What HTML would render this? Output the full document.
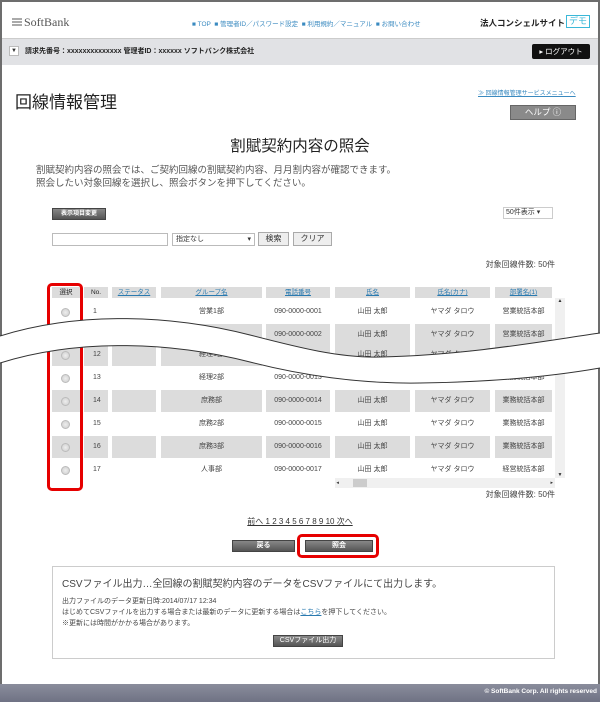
<!DOCTYPE html>
<html><head><meta charset="utf-8"><style>
*{margin:0;padding:0;box-sizing:border-box}
body{width:600px;height:702px;position:relative;background:#fff;font-family:"Liberation Sans","Noto Sans CJK JP",sans-serif;color:#333;overflow:hidden}
.a{position:absolute;white-space:nowrap}
.btn{position:absolute;background:linear-gradient(#888,#555);color:#fff;font-size:7px;text-align:center;font-weight:bold;border:1px solid #444}
.cell{position:absolute;height:20px;font-size:7px;line-height:20px;text-align:center;color:#444}
.sh{background:#dcdcdc}
.hd{position:absolute;top:287px;height:11px;background:#dcdcdc;font-size:6.5px;line-height:11px;text-align:center;color:#2a7ab0;text-decoration:underline}
.rad{position:absolute;width:9px;height:9px;border-radius:50%;border:1px solid #bbb;background:radial-gradient(#eee,#ccc)}
</style></head><body>
<div class="a" style="left:0;top:0;width:600px;height:684px;border:2px solid #6d6d6d;border-bottom:none"></div>
<!-- header -->
<div class="a" style="left:12px;top:18px;width:10px;height:2px;background:#aaa;box-shadow:0 3px 0 #aaa,0 6px 0 #aaa"></div>
<div class="a" style="left:24px;top:15px;font-family:'Liberation Serif',serif;font-size:12px;color:#555">SoftBank</div>
<div class="a" style="left:192px;top:18px;font-size:6.5px;color:#3a8ac0">■ TOP &nbsp;■ 管理者ID／パスワード設定 &nbsp;■ 利用規約／マニュアル &nbsp;■ お問い合わせ</div>
<div class="a" style="left:480px;top:17px;font-size:8.5px;font-weight:bold;color:#222">法人コンシェルサイト</div>
<div class="a" style="left:566px;top:15px;width:24px;height:13px;border:1px solid #3bb8d8;color:#3bb8d8;font-size:9px;text-align:center;line-height:11px">デモ</div>
<div class="a" style="left:2px;top:38px;width:596px;height:27px;background:#e1e2e5;border-top:1px solid #ccc"></div>
<div class="a" style="left:9px;top:46px;width:10px;height:10px;background:#fff;border:1px solid #bbb;font-size:6px;text-align:center;line-height:8px">▼</div>
<div class="a" style="left:25px;top:46px;font-size:7px;font-weight:bold;color:#222">請求先番号：xxxxxxxxxxxxxx 管理者ID：xxxxxx ソフトバンク株式会社</div>
<div class="a" style="left:532px;top:44px;width:58px;height:15px;background:#111;border-radius:2px;color:#fff;font-size:7.5px;text-align:center;line-height:15px">▸ ログアウト</div>
<div class="a" style="left:15px;top:88px;font-size:17px;color:#222">回線情報管理</div>
<div class="a" style="left:478px;top:88px;font-size:6px;color:#3a8ac0;text-decoration:underline">≫ 回線情報管理サービスメニューへ</div>
<div class="a" style="left:510px;top:105px;width:66px;height:15px;background:#8a8a8a;border:1px solid #666;color:#fff;font-size:8.5px;text-align:center;line-height:13px">ヘルプ ⓘ</div>
<div class="a" style="left:0;width:600px;top:134px;text-align:center;font-size:15.5px;color:#222">割賦契約内容の照会</div>
<div class="a" style="left:36px;top:164px;font-size:9.5px;line-height:13px;color:#555">割賦契約内容の照会では、ご契約回線の割賦契約内容、月月割内容が確認できます。<br>照会したい対象回線を選択し、照会ボタンを押下してください。</div>
<!-- controls -->
<div class="btn" style="left:52px;top:208px;width:54px;height:12px;line-height:10px;font-size:6px">表示項目変更</div>
<div class="a" style="left:503px;top:207px;width:50px;height:12px;border:1px solid #ccc;font-size:7px;line-height:10px;padding-left:2px">50件表示 ▾</div>
<div class="a" style="left:52px;top:233px;width:116px;height:13px;border:1px solid #bbb"></div>
<div class="a" style="left:172px;top:233px;width:83px;height:13px;border:1px solid #bbb;font-size:7px;line-height:11px;padding-left:3px">指定なし<span style="position:absolute;right:3px">▾</span></div>
<div class="a" style="left:258px;top:232px;width:31px;height:14px;border:1px solid #aaa;background:#eee;font-size:8px;text-align:center;line-height:12px">検索</div>
<div class="a" style="left:293px;top:232px;width:39px;height:14px;border:1px solid #aaa;background:#eee;font-size:8px;text-align:center;line-height:12px">クリア</div>
<div class="a" style="right:45px;top:259px;font-size:8px;color:#444">対象回線件数: 50件</div>
<!-- table header -->
<div class="hd" style="left:52px;width:28px;color:#222;text-decoration:none">選択</div>
<div class="hd" style="left:84px;width:24px;color:#222;text-decoration:none">No.</div>
<div class="hd" style="left:112px;width:44px">ステータス</div>
<div class="hd" style="left:161px;width:101px">グループ名</div>
<div class="hd" style="left:266px;width:64px">電話番号</div>
<div class="hd" style="left:335px;width:75px">氏名</div>
<div class="hd" style="left:415px;width:75px">氏名(カナ)</div>
<div class="hd" style="left:495px;width:57px">部署名(1)</div>
<div class="a" style="left:555px;top:298px;width:10px;height:180px;background:#f0f0f0;font-size:5px;text-align:center">▲<div style="position:absolute;bottom:0;width:10px">▼</div></div>
<div class="a" style="left:335px;top:478px;width:220px;height:10px;background:#f0f0f0;font-size:5px;line-height:10px">&nbsp;◂<div style="position:absolute;left:18px;top:1px;width:14px;height:8px;background:#ccc"></div><span style="position:absolute;right:2px">▸</span></div>
<div id="rows"></div>
<script>
var rows=[[300,'1','営業1部','0001',0,'営業統括本部'],[323,'2','営業2部','0002',1,'営業統括本部'],[343,'12','経理1部','0012',1,'業務統括本部'],[366,'13','経理2部','0013',0,'業務統括本部'],[389,'14','庶務部','0014',1,'業務統括本部'],[412,'15','庶務2部','0015',0,'業務統括本部'],[435,'16','庶務3部','0016',1,'業務統括本部'],[458,'17','人事部','0017',0,'経営統括本部']];
var cols=[[52,28],[84,24],[112,44],[161,101],[266,64],[335,75],[415,75],[495,57]];var h='';
rows.forEach(function(r){var t=r[0];var v=['','<span>'+r[1]+'</span>','',r[2],'090-0000-'+r[3],'山田 太郎','ヤマダ タロウ',r[5]];
cols.forEach(function(c,i){h+='<div class="cell'+(r[4]?' sh':'')+'" style="left:'+c[0]+'px;top:'+(t+1)+'px;width:'+c[1]+'px;height:22px;line-height:22px;'+(i==1?'text-align:left;padding-left:9px;':'')+'">'+v[i]+'</div>';});
h+='<div class="rad" style="left:61px;top:'+(t+8)+'px"></div>';});
document.getElementById('rows').innerHTML=h;
</script>
<div class="a" style="left:47px;top:283px;width:36px;height:208px;border:3px solid #e60000;border-radius:5px"></div>
<!-- wave -->
<svg class="a" style="left:0;top:290px" width="600" height="110" viewBox="0 290 600 110">
<path d="M0,336 C70,314 160,312 250,335 C300,348 340,358 380,357 C470,355 550,340 600,333 L600,368 C560,375 500,382 420,383 C360,384 300,375 250,362 C160,339 70,341 0,363 Z" fill="#fff"/>
<path d="M0,336 C70,314 160,312 250,335 C300,348 340,358 380,357 C470,355 550,340 600,333" fill="none" stroke="#333" stroke-width="1"/>
<path d="M0,363 C70,341 160,339 250,362 C300,375 360,384 420,383 C500,382 560,375 600,368" fill="none" stroke="#333" stroke-width="1"/>
</svg>
<div class="a" style="right:45px;top:489px;font-size:8px;color:#444">対象回線件数: 50件</div>
<div class="a" style="left:0;width:600px;top:516px;text-align:center;font-size:8px;color:#333;text-decoration:underline">前へ 1 2 3 4 5 6 7 8 9 10 次へ</div>
<div class="btn" style="left:232px;top:540px;width:63px;height:12px;line-height:10px">戻る</div>
<div class="btn" style="left:305px;top:540px;width:68px;height:12px;line-height:10px">照会</div>
<div class="a" style="left:297px;top:534px;width:82px;height:24px;border:3px solid #e60000;border-radius:5px"></div>
<!-- csv -->
<div class="a" style="left:52px;top:566px;width:503px;height:93px;border:1px solid #ccc"></div>
<div class="a" style="left:62px;top:575px;font-size:10px;color:#444">CSVファイル出力…全回線の割賦契約内容のデータをCSVファイルにて出力します。</div>
<div class="a" style="left:62px;top:596px;font-size:7px;line-height:11px;color:#444">出力ファイルのデータ更新日時:2014/07/17 12:34<br>はじめてCSVファイルを出力する場合または最新のデータに更新する場合は<span style="color:#2a7ab0;text-decoration:underline">こちら</span>を押下してください。<br>※更新には時間がかかる場合があります。</div>
<div class="btn" style="left:273px;top:635px;width:70px;height:12px;line-height:10px;font-weight:normal">CSVファイル出力</div>
<!-- footer -->
<div class="a" style="left:0;top:684px;width:600px;height:18px;background:linear-gradient(#8a8d9c,#6f7284)"></div>
<div class="a" style="right:3px;top:688px;font-size:6.5px;font-weight:bold;color:#fff">© SoftBank Corp. All rights reserved</div>
</body></html>
